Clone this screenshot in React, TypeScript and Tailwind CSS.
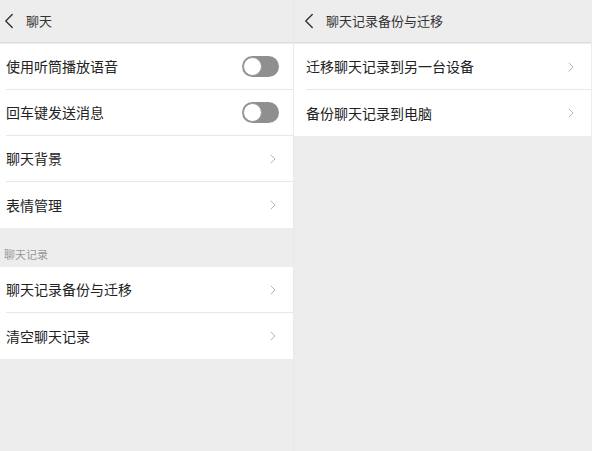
import { ChevronLeft, ChevronRight } from 'lucide-react';

const font = { fontFamily: '"Noto Sans CJK SC", "Noto Sans", sans-serif' };

function Header({ title, pad }: { title: string; pad: string }) {
  return (
    <div className={`flex h-[43px] items-center border-b border-[#dcdcdc] bg-[#ededed] ${pad}`}>
      <ChevronLeft size={26} strokeWidth={1.3} className="-ml-[10px] text-[#333]" />
      <span className="ml-[4px] text-[13px] text-[#333]">{title}</span>
    </div>
  );
}

function Toggle() {
  return (
    <div className="flex h-[21px] w-[37px] items-center rounded-full bg-[#8f8f8f] p-[1px]">
      <div className="h-[19px] w-[19px] rounded-full border border-[#9a9a9a] bg-white" />
    </div>
  );
}

function Row({ label, toggle, last, pad }: { label: string; toggle?: boolean; last?: boolean; pad: string }) {
  return (
    <div className={`flex h-[46px] items-center bg-white ${pad}`}>
      <div className={`flex h-full flex-1 items-center ${last ? '' : 'border-b border-[#e8e8e8]'}`}>
        <span className="flex-1 text-[14px] text-[#222]">{label}</span>
        {toggle ? (
          <div className="mr-[14px]"><Toggle /></div>
        ) : (
          <ChevronRight size={16} strokeWidth={1.3} className="mr-[12px] text-[#aaa]" />
        )}
      </div>
    </div>
  );
}

export default function App() {
  return (
    <div className="flex h-[451px] w-[592px] bg-[#ededed]" style={font}>
      <div className="w-[293px] shrink-0">
        <Header title="聊天" pad="pl-[6px]" />
        <div className="mt-[1px]">
          <Row label="使用听筒播放语音" toggle pad="pl-[6px]" />
          <Row label="回车键发送消息" toggle pad="pl-[6px]" />
          <Row label="聊天背景" pad="pl-[6px]" />
          <Row label="表情管理" last pad="pl-[6px]" />
        </div>
        <div className="flex h-[39px] items-end pb-[5px] pl-[4px] text-[11px] text-[#999]">聊天记录</div>
        <Row label="聊天记录备份与迁移" pad="pl-[6px]" />
        <Row label="清空聊天记录" last pad="pl-[6px]" />
      </div>
      <div className="flex-1 border-l border-[#e9e9e9] pr-[1px]">
        <Header title="聊天记录备份与迁移" pad="pl-[12px]" />
        <div className="mt-[1px]">
          <Row label="迁移聊天记录到另一台设备" pad="pl-[12px]" />
          <Row label="备份聊天记录到电脑" last pad="pl-[12px]" />
        </div>
      </div>
    </div>
  );
}
